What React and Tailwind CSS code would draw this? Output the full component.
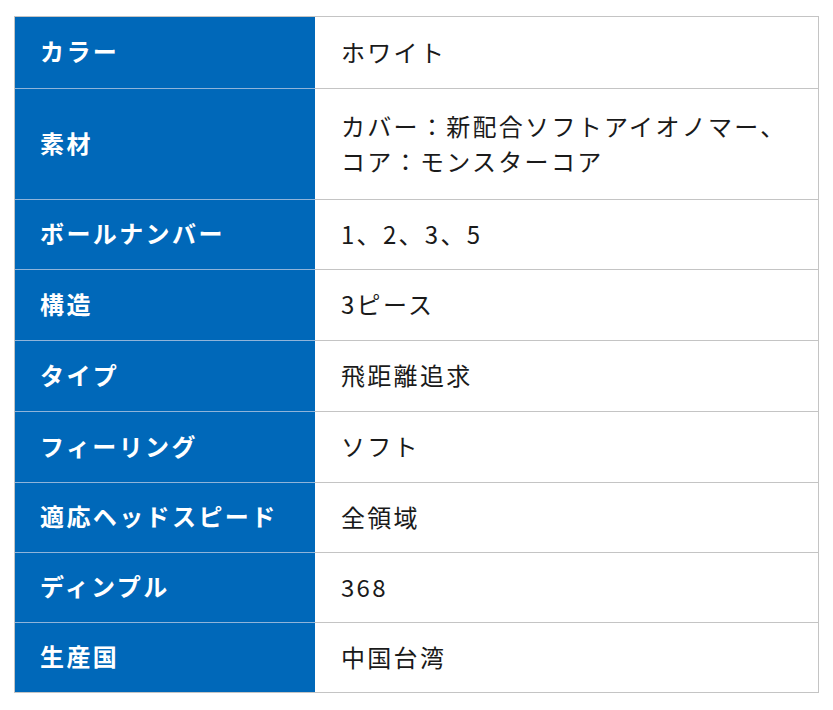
const specs = [
  { label: 'カラー', value: ['ホワイト'], h: 'h-[71px]' },
  { label: '素材', value: ['カバー：新配合ソフトアイオノマー、', 'コア：モンスターコア'], h: 'h-[111px]' },
  { label: 'ボールナンバー', value: ['1、2、3、5'], h: 'h-[70px]' },
  { label: '構造', value: ['3ピース'], h: 'h-[71px]' },
  { label: 'タイプ', value: ['飛距離追求'], h: 'h-[71px]' },
  { label: 'フィーリング', value: ['ソフト'], h: 'h-[71px]' },
  { label: '適応ヘッドスピード', value: ['全領域'], h: 'h-[70px]' },
  { label: 'ディンプル', value: ['368'], h: 'h-[70px]' },
  { label: '生産国', value: ['中国台湾'], h: 'h-[70px]' },
];

export default function App() {
  return (
    <div
      className="w-[833px] h-[710px] bg-white pt-[16px] pl-[14px]"
      style={{ fontFamily: '"Noto Sans CJK JP", "Noto Sans", sans-serif' }}
    >
      <div className="w-[805px] border border-[#c4c4c4] flex flex-col">
        {specs.map((row, i) => (
          <div key={row.label} className={`flex ${row.h}`}>
            <div
              className={`w-[300px] shrink-0 bg-[#0068b9] flex items-center pl-[25px] pb-[3px] text-white font-bold text-[24px] tracking-[2.4px] ${
                i > 0 ? 'border-t border-[#8fb4da]' : ''
              }`}
            >
              {row.label}
            </div>
            <div
              className={`flex-1 flex flex-col justify-center pl-[26px] pb-[3px] text-[#1a1a1a] text-[24px] leading-[35px] tracking-[2.3px] ${
                i > 0 ? 'border-t border-[#c4c4c4]' : ''
              }`}
            >
              {row.value.map((line) => (
                <div key={line}>{line}</div>
              ))}
            </div>
          </div>
        ))}
      </div>
    </div>
  );
}
